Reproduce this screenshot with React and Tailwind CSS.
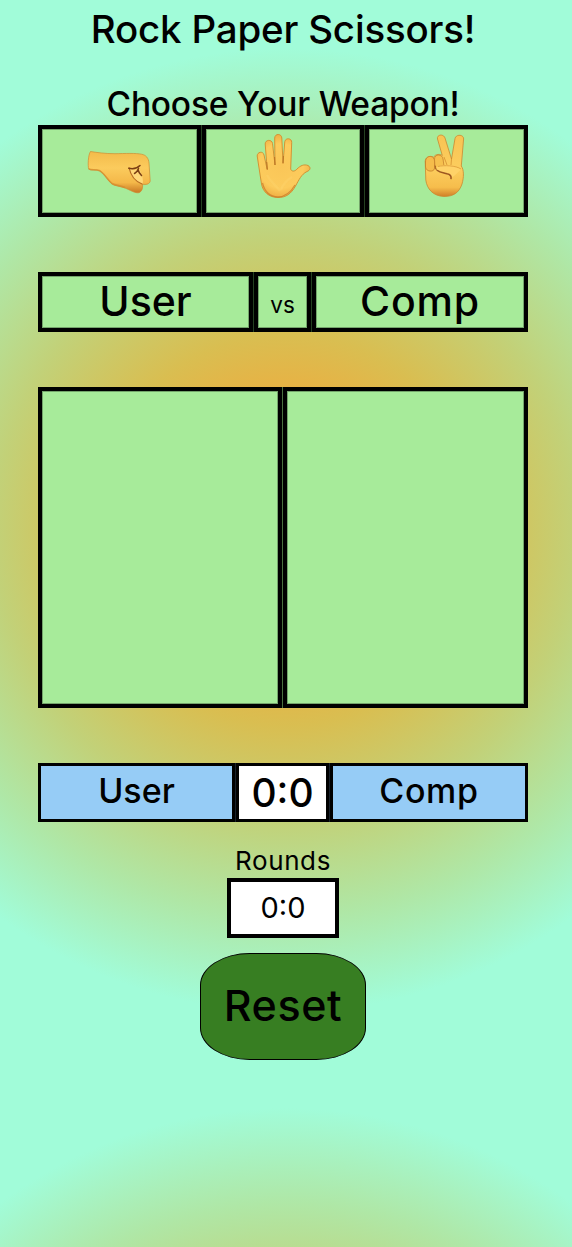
const CELL = "border-4 border-black bg-[#a7eb9a] shadow-[inset_0_0_0_1px_rgba(0,0,0,0.3)]";
const SCORE = "flex items-center justify-center border-3 border-black";

function Fist() {
  return (
    <svg width="66" height="46" viewBox="0 0 66 46" aria-hidden="true">
      <defs>
        <linearGradient id="fistSkin" x1="0" y1="0" x2="0" y2="1">
          <stop offset="0" stopColor="#f3bb4a" />
          <stop offset="0.4" stopColor="#fbcb5d" />
          <stop offset="0.75" stopColor="#f4b849" />
          <stop offset="1" stopColor="#c87723" />
        </linearGradient>
      </defs>
      <path d="M3.5 1.5C10 2.5 18 3.7 28 3.7C38 3.5 49 3 54.500 4.200C59 5 61.500 8 62 13L63.200 31C62.800 34 59 35 55.500 34.500C56 38 55 41.500 52 42.700C48 43.500 43 40 38 38C33 36 28 36 25 34C20 30 18 24 13 21C9 19 4 21 1.700 19C0.800 16 1 5 3.500 1.500Z" fill="url(#fistSkin)" stroke="#d18b31" strokeWidth="0.700" />
      <path d="M1.800 18.800C4 20.500 9 19 13 20.800C18 24 20 29.500 25 33.500C28 35.500 33 35.500 38 37.500" fill="none" stroke="#d48a2c" strokeWidth="1.600" opacity="0.700" />
      <path d="M42.500 19C45 20 49 20 52.500 19.500C55.500 25 56.500 31 55.500 34C49 31.500 44 26 42.500 19Z" fill="#ffd878" />
      <path d="M42 17.500C43.500 25 48 31.500 55.500 34.200" fill="none" stroke="#b66b23" strokeWidth="1.200" />
      <path d="M41.800 18.300C46 19.200 50 18.500 53 15.500M51.500 18.500C50.500 21.500 49.500 22.500 47.500 23.500M51 19.500C51.500 22 53 24 54.500 25.500" fill="none" stroke="#7b3f13" strokeWidth="1.500" strokeLinecap="round" />
    </svg>
  );
}

function Hand() {
  return (
    <svg width="56" height="66" viewBox="0 0 56 66" aria-hidden="true">
      <defs>
        <radialGradient id="palmSkin" gradientUnits="userSpaceOnUse" cx="25" cy="33" r="37">
          <stop offset="0" stopColor="#fac658" />
          <stop offset="0.600" stopColor="#fccb5c" />
          <stop offset="0.850" stopColor="#f0b044" />
          <stop offset="1" stopColor="#dc922f" />
        </radialGradient>
      </defs>
      <path d="M1.200 23C1 19 7 17.500 8 22L11.200 36.500L9.200 11C9 6.500 16 6 16.500 10.500L19 32L18.700 5C18.800 0.300 25.600 0.300 25.800 5L27 30.500L28.800 8.500C29.500 4.500 36 5 35.700 9.500L34.700 36C35.500 39 39 38.500 41 36C44.500 32.500 48 31 52 32.500C55.500 34.500 54 37.500 51 38.500C45 41.500 43 47 39.500 53C35 61 30 64.500 22 64.500C13 64.500 7 59 5.500 51Z" fill="url(#palmSkin)" stroke="#d28b2d" strokeWidth="0.900" strokeLinejoin="round" />
      <path d="M6.500 50C9 60 15 63.800 22 63.800C30 63.800 35 59 39 52" fill="none" stroke="#c8772a" strokeWidth="1.200" opacity="0.700" />
      <path d="M11.300 36.500L10.700 29M19 32L18.600 24M27 30L27.400 23" fill="none" stroke="#b97527" strokeWidth="1" />
      <path d="M11 42C15 50 20 52 24 58M36 44C31 47 27 51 25 57" fill="none" stroke="#ffdc78" strokeWidth="2.500" opacity="0.250" />
    </svg>
  );
}

function Victory() {
  return (
    <svg width="42" height="64" viewBox="0 0 42 64" aria-hidden="true">
      <defs>
        <linearGradient id="peaceSkin" x1="0" y1="0" x2="0" y2="1">
          <stop offset="0" stopColor="#f8c453" />
          <stop offset="0.550" stopColor="#fccd5e" />
          <stop offset="0.850" stopColor="#f6bd4c" />
          <stop offset="1" stopColor="#d07f28" />
        </linearGradient>
      </defs>
      <path d="M13.500 5C12.500 0.500 19.500 -0.500 21 4L27.500 25L31 4.500C32 -0.200 40 0.500 39.600 5L37.300 32C40 36 40 43 38 50C35 59 29 62.500 20 62.500C9 62 3 55 1.800 46L1.200 27C1.500 22 8 21.500 9.500 23.500C11 19.500 17 20 18.300 21.500Z" fill="url(#peaceSkin)" stroke="#cc8830" strokeWidth="0.800" />
      <path d="M20 23L23 31M27.500 25L27 31" fill="none" stroke="#d89636" strokeWidth="0.900" />
      <path d="M1.500 28C1.500 20.500 10.500 21 10.500 27V34C10.500 38.500 2 38 1.500 33Z" fill="#f5bc4b" stroke="#c6832d" strokeWidth="0.900" />
      <path d="M10.500 25C10.500 19.500 18.500 20 19 25L20 32C18 35 14 36 11 34Z" fill="#f6c04e" stroke="#c6832d" strokeWidth="0.800" />
      <path d="M13 33C17 30 32 31 37 35.500L30 42L27 44C26 40 18 39 14.500 37.500C12.500 36.500 12 34.500 13 33Z" fill="#ffd268" />
      <path d="M37 35C32 31.500 20 31 14 32.500" fill="none" stroke="#dc9b39" strokeWidth="0.800" />
      <path d="M13.500 36.500C16 38.800 20 38.800 23 39.800C26 40.500 27.500 42 27 44.500" fill="none" stroke="#9d5720" strokeWidth="1.600" strokeLinecap="round" />
      <path d="M11.200 32C11.500 34.500 11.800 35.500 13 36.500" fill="none" stroke="#9d5720" strokeWidth="1" strokeLinecap="round" />
    </svg>
  );
}

export default function App() {
  return (
    <div className="h-[1247px] w-full overflow-hidden bg-[radial-gradient(circle,#f2a93b_16.6%,#d9be51_32.5%,#c2d178_48.3%,#afe7a6_64.2%,#a1fcd9_80%)] bg-[length:572px_1060px] bg-repeat-y font-['Inter','Open_Sans',sans-serif] font-medium text-black">
      <main className="flex flex-col pr-11 pl-[38px]">
        <h1 className="flex h-[58px] justify-center pt-[3px] text-[38.500px] leading-[52px] tracking-[-0.2px] whitespace-nowrap">Rock Paper Scissors!</h1>
        <h2 className="flex h-[67px] justify-center pt-[25px] text-[33.500px] leading-[42px] tracking-[-0.2px] whitespace-nowrap">Choose Your Weapon!</h2>

        <div className="grid h-[92px] grid-cols-[163px_162px_163px] gap-px bg-[#244020]">
          <button aria-label="Rock" className={`${CELL} flex items-start pt-[21px] pl-[45px]`}><Fist /></button>
          <button aria-label="Paper" className={`${CELL} flex items-start pt-[4px] pl-[50px]`}><Hand /></button>
          <button aria-label="Scissors" className={`${CELL} flex items-start pt-[5px] pl-[55px]`}><Victory /></button>
        </div>

        <div className="mt-[55px] grid h-[60px] grid-cols-[215px_57px_216px] grid-rows-[60px] gap-px bg-[#244020] leading-none">
          <div className={`${CELL} flex items-center justify-center pb-0.5 text-[41px]`}>User</div>
          <div className={`${CELL} flex items-center justify-center pt-1.5 text-[22.500px] font-normal`}>vs</div>
          <div className={`${CELL} flex items-center justify-center pb-0.5 text-[41px] tracking-[0.8px]`}>Comp</div>
        </div>

        <div className="mt-[55px] grid h-[321px] grid-cols-[244px_245px] gap-px bg-[#4b7040]">
          <div className={CELL} />
          <div className={CELL} />
        </div>

        <div className="mt-[55px] grid h-[59px] grid-cols-[197px_93px_198px] grid-rows-[59px] gap-px bg-[#18222c] leading-none">
          <div className={`${SCORE} bg-[#96ccf6] pb-1 text-[34px]`}>User</div>
          <div className={`${SCORE} bg-white text-[39px]`}>0:0</div>
          <div className={`${SCORE} bg-[#96ccf6] pb-1 text-[34px] tracking-[0.7px]`}>Comp</div>
        </div>

        <div className="mt-[23px] flex h-[33px] items-center justify-center pb-0.5 text-[26px] leading-none font-normal tracking-[0.6px]">Rounds</div>
        <div className="flex h-[60px] w-[112px] items-center justify-center self-center border-4 border-black bg-white pb-0.5 text-[29px] leading-none font-normal">0:0</div>
        <button className="mt-[15px] flex h-[107px] w-[166px] items-center justify-center self-center rounded-[30%] border border-black bg-[#377e22] pb-0.5 text-[43px] leading-none tracking-[0.6px]">Reset</button>
      </main>
    </div>
  );
}
